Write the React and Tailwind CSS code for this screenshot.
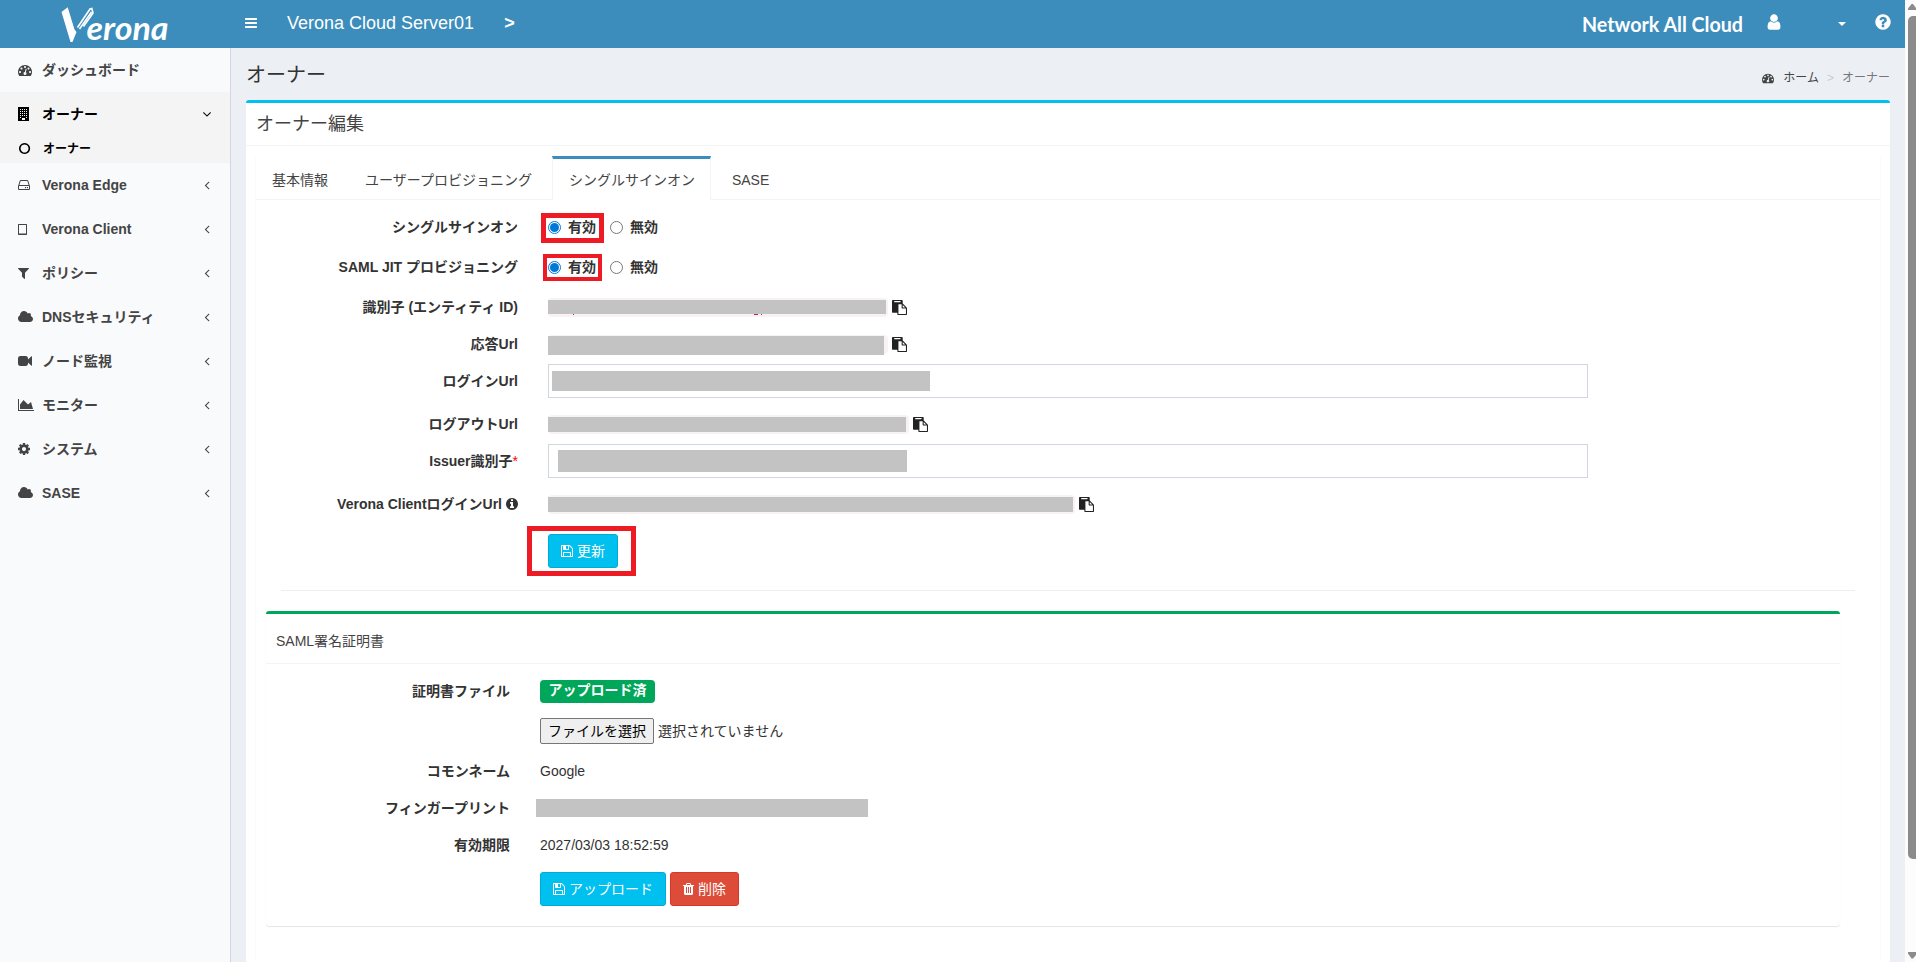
import React from 'react';
import clsx from 'clsx';

// Font Awesome 4 glyph outlines, 1792 units per em
const ICONS = {
  bars: { box: '128 128 1536 1536', d: 'M1664 1344v128q0 26-19 45t-45 19h-1408q-26 0-45-19t-19-45v-128q0-26 19-45t45-19h1408q26 0 45 19t19 45zm0-512v128q0 26-19 45t-45 19h-1408q-26 0-45-19t-19-45v-128q0-26 19-45t45-19h1408q26 0 45 19t19 45zm0-512v128q0 26-19 45t-45 19h-1408q-26 0-45-19t-19-45v-128q0-26 19-45t45-19h1408q26 0 45 19t19 45z' },
  dashboard: { box: '0 0 1792 1792', d: 'M384 1152q0-53-37.5-90.5t-90.5-37.5-90.5 37.5-37.5 90.5 37.5 90.5 90.5 37.5 90.5-37.5 37.5-90.5zm192-448q0-53-37.5-90.5t-90.5-37.5-90.5 37.5-37.5 90.5 37.5 90.5 90.5 37.5 90.5-37.5 37.5-90.5zm428 481l101-382q6-26-7.5-48.5t-38.5-29.5-48 6.5-30 39.5l-101 382q-60 5-107 43.5t-63 98.5q-20 77 20 146t117 89 146-20 89-117q16-60-6-117t-72-91zm660-33q0-53-37.5-90.5t-90.5-37.5-90.5 37.5-37.5 90.5 37.5 90.5 90.5 37.5 90.5-37.5 37.5-90.5zm-640-640q0-53-37.5-90.5t-90.5-37.5-90.5 37.5-37.5 90.5 37.5 90.5 90.5 37.5 90.5-37.5 37.5-90.5zm448 192q0-53-37.5-90.5t-90.5-37.5-90.5 37.5-37.5 90.5 37.5 90.5 90.5 37.5 90.5-37.5 37.5-90.5zm320 448q0 261-141 483-19 29-54 29h-1402q-35 0-54-29-141-221-141-483 0-182 71-348t191-286 286-191 348-71 348 71 286 191 191 286 71 348z' },
  building: { box: '0 0 1792 1792', d: 'M0 0h1408v1792h-1408zM256 256v128h128v-128zm256 0v128h128v-128zm256 0v128h128v-128zm256 0v128h128v-128zM256 512v128h128v-128zm256 0v128h128v-128zm256 0v128h128v-128zm256 0v128h128v-128zM256 768v128h128v-128zm256 0v128h128v-128zm256 0v128h128v-128zm256 0v128h128v-128zM256 1024v128h128v-128zm256 0v128h128v-128zm256 0v128h128v-128zm256 0v128h128v-128zM256 1280v128h128v-128zm768 0v128h128v-128zM512 1408v256h384v-256z' },
  circle: { box: '128 0 1792 1792', d: 'M896 352q-148 0-273 73t-198 198-73 273 73 273 198 198 273 73 273-73 198-198 73-273-73-273-198-198-273-73zm768 544q0 209-103 385.5t-279.5 279.5-385.5 103-385.5-103-279.5-279.5-103-385.5 103-385.5 279.5-279.5 385.5-103 385.5 103 279.5 279.5 103 385.5z' },
  hdd: { box: '128 0 1792 1792', d: 'M1168 1216q0 33-23.5 56.5t-56.5 23.5-56.5-23.5-23.5-56.5 23.5-56.5 56.5-23.5 56.5 23.5 23.5 56.5zm256 0q0 33-23.5 56.5t-56.5 23.5-56.5-23.5-23.5-56.5 23.5-56.5 56.5-23.5 56.5 23.5 23.5 56.5zm112 160v-320q0-13-9.5-22.5t-22.5-9.5h-1216q-13 0-22.5 9.5t-9.5 22.5v320q0 13 9.5 22.5t22.5 9.5h1216q13 0 22.5-9.5t9.5-22.5zm-1230-480h1180l-157-482q-4-13-16-21.5t-26-8.5h-782q-14 0-26 8.5t-16 21.5zm1358 160v320q0 66-47 113t-113 47h-1216q-66 0-113-47t-47-113v-320q0-25 16-75l197-606q17-53 63-86t101-33h782q55 0 101 33t63 86l197 606q16 50 16 75z' },
  tablet: { box: '0 0 1792 1792', d: 'M64 256h1024l64 64v1280l-64 64h-1024l-64-64v-1280zM128 384v1088h896v-1088z' },
  filter: { box: '192 0 1792 1792', d: 'M1595 295q17 41-14 70l-493 493v742q0 42-39 59-13 5-25 5-27 0-45-19l-256-256q-19-19-19-45v-486l-493-493q-31-29-14-70 17-39 59-39h1280q42 0 59 39z' },
  cloud: { box: '64 0 1920 1792', w: 15, d: 'M1984 1152q0 159-112.5 271.5t-271.5 112.5h-1088q-185 0-316.5-131.5t-131.5-316.5q0-132 71-241.5t187-163.5q-2-28-2-43 0-212 150-362t362-150q158 0 286.5 88t187.5 230q70-62 166-62 106 0 181 75t75 181q0 75-41 138 129 30 213 134.5t84 239.5z' },
  video: { box: '0 0 1792 1792', d: 'M1792 352v1088q0 42-39 59-13 5-25 5-27 0-45-19l-403-403v166q0 119-84.5 203.5t-203.5 84.5h-704q-119 0-203.5-84.5t-84.5-203.5v-704q0-119 84.5-203.5t203.5-84.5h704q119 0 203.5 84.5t84.5 203.5v165l403-402q18-19 45-19 12 0 25 5 39 17 39 59z' },
  area: { box: '0 0 2048 1792', w: 16, d: 'M2048 1536v128h-2048v-1536h128v1408h1920zm-384-1024l256 896h-1664v-576l448-576 576 576z' },
  cog: { box: '128 0 1792 1792', d: 'M1152 896q0-106-75-181t-181-75-181 75-75 181 75 181 181 75 181-75 75-181zm512-109v222q0 12-8 23t-20 13l-185 28q-19 54-39 91 35 50 107 138 10 12 10 25t-9 23q-27 37-99 108t-94 71q-12 0-26-9l-138-108q-44 23-91 38-16 136-29 186-7 28-36 28h-222q-14 0-24.5-8.5t-11.5-21.5l-28-184q-49-16-90-37l-141 107q-10 9-25 9-14 0-25-11-126-114-165-168-7-10-7-23 0-12 8-23 15-21 51-66.5t54-70.5q-27-50-41-99l-183-27q-13-2-21-12.5t-8-23.5v-222q0-12 8-23t19-13l186-28q14-46 39-92-40-57-107-138-10-12-10-24 0-10 9-23 26-36 98.5-107.5t94.5-71.5q13 0 26 10l138 107q44-23 91-38 16-136 29-186 7-28 36-28h222q14 0 24.5 8.5t11.5 21.5l28 184q49 16 90 37l142-107q9-9 24-9 13 0 25 10 129 119 165 170 7 8 7 22 0 12-8 23-15 21-51 66.5t-54 70.5q26 50 41 98l183 28q13 2 21 12.5t8 23.5z' },
  angleLeft: { box: '0 0 1792 1792', d: 'M1203 544q0 13-10 23l-393 393 393 393q10 10 10 23t-10 23l-50 50q-10 10-23 10t-23-10l-466-466q-10-10-10-23t10-23l466-466q10-10 23-10t23 10l50 50q10 10 10 23z' },
  angleDown: { box: '0 0 1792 1792', d: 'M1395 736q0 13-10 23l-466 466q-10 10-23 10t-23-10l-466-466q-10-10-10-23t10-23l50-50q10-10 23-10t23 10l393 393 393-393q10-10 23-10t23 10l50 50q10 10 10 23z' },
  user: { box: '0 0 1792 1792', d: 'M1536 1399q0 109-62.5 187t-150.5 78h-854q-88 0-150.5-78t-62.5-187q0-85 8.5-160.5t31.5-152 58.5-131 94-89 134.5-34.5q131 128 313 128t313-128q76 0 134.5 34.5t94 89 58.5 131 31.5 152 8.5 160.5zm-256-887q0 159-112.5 271.5t-271.5 112.5-271.5-112.5-112.5-271.5 112.5-271.5 271.5-112.5 271.5 112.5 112.5 271.5z' },
  question: { box: '0 0 1792 1792', d: 'M1024 1376v-192q0-14-9-23t-23-9h-192q-14 0-23 9t-9 23v192q0 14 9 23t23 9h192q14 0 23-9t9-23zm256-672q0-88-55.5-163t-138.5-116-170-41q-243 0-371 213-15 24 8 42l132 100q7 6 19 6 16 0 25-12 53-68 86-92 34-24 86-24 48 0 85.5 26t37.5 59q0 38-20 61t-68 45q-63 28-115.5 86.5t-52.5 125.5v36q0 14 9 23t23 9h192q14 0 23-9t9-23q0-19 21.5-49.5t54.5-49.5q32-18 49-28.5t46-35 44.5-48 28-60.5 12.5-81zm384 192q0 209-103 385.5t-279.5 279.5-385.5 103-385.5-103-279.5-279.5-103-385.5 103-385.5 279.5-279.5 385.5-103 385.5 103 279.5 279.5 103 385.5z' },
  info: { box: '128 0 1536 1792', w: 12, d: 'M1152 1376v-160q0-14-9-23t-23-9h-96v-512q0-14-9-23t-23-9h-320q-14 0-23 9t-9 23v160q0 14 9 23t23 9h96v320h-96q-14 0-23 9t-9 23v160q0 14 9 23t23 9h448q14 0 23-9t9-23zm-128-896v-160q0-14-9-23t-23-9h-192q-14 0-23 9t-9 23v160q0 14 9 23t23 9h192q14 0 23-9t9-23zm640 416q0 209-103 385.5t-279.5 279.5-385.5 103-385.5-103-279.5-279.5-103-385.5 103-385.5 279.5-279.5 385.5-103 385.5 103 279.5 279.5 103 385.5z' },
  paste: { box: '0 0 1792 1792', d: 'M768 1664h896v-640h-416q-40 0-68-28t-28-68v-416h-384v1152zm256-1440v-64q0-13-9.5-22.5t-22.5-9.5h-704q-13 0-22.5 9.5t-9.5 22.5v64q0 13 9.5 22.5t22.5 9.5h704q13 0 22.5-9.5t9.5-22.5zm256 672h299l-299-299v299zm512 128v672q0 40-28 68t-68 28h-960q-40 0-68-28t-28-68v-160h-544q-40 0-68-28t-28-68v-1344q0-40 28-68t68-28h1088q40 0 68 28t28 68v328q21 13 36 28l408 408q28 28 48 76t20 88z' },
  save: { box: '128 0 1536 1792', w: 12, d: 'M512 1536h768v-384h-768v384zm896 0h128v-896q0-14-10-38.5t-20-34.5l-281-281q-10-10-34-20t-39-10v416q0 40-28 68t-68 28h-576q-40 0-68-28t-28-68v-416h-128v1280h128v-416q0-40 28-68t68-28h832q40 0 68 28t28 68v416zm-384-928v-320q0-13-9.5-22.5t-22.5-9.5h-192q-13 0-22.5 9.5t-9.5 22.5v320q0 13 9.5 22.5t22.5 9.5h192q13 0 22.5-9.5t9.5-22.5zm640 32v928q0 40-28 68t-68 28h-1344q-40 0-68-28t-28-68v-1344q0-40 28-68t68-28h928q40 0 88 20t76 48l280 280q28 28 48 76t20 88z' },
  trash: { box: '192 0 1408 1792', w: 11, d: 'M704 1376v-704q0-14-9-23t-23-9h-64q-14 0-23 9t-9 23v704q0 14 9 23t23 9h64q14 0 23-9t9-23zm256 0v-704q0-14-9-23t-23-9h-64q-14 0-23 9t-9 23v704q0 14 9 23t23 9h64q14 0 23-9t9-23zm256 0v-704q0-14-9-23t-23-9h-64q-14 0-23 9t-9 23v704q0 14 9 23t23 9h64q14 0 23-9t9-23zm-544-992h448l-48-117q-7-9-17-11h-317q-10 2-17 11zm928 32v64q0 14-9 23t-23 9h-96v948q0 83-47 143.5t-113 60.5h-832q-66 0-113-58.5t-47-141.5v-952h-96q-14 0-23-9t-9-23v-64q0-14 9-23t23-9h309l70-167q15-37 54-63t79-26h320q40 0 79 26t54 63l70 167h309q14 0 23 9t9 23z' },
};

function Icon({ name, size = 14, className }) {
  const { box, d, w = 14 } = ICONS[name];
  const evenOdd = name === 'building' || name === 'tablet';
  return (
    <svg
      viewBox={box}
      width={(w * size) / 14}
      height={size}
      fill="currentColor"
      fillRule={evenOdd ? 'evenodd' : 'nonzero'}
      className={clsx('shrink-0', className)}
    >
      <path d={d} />
    </svg>
  );
}

const MENU = [
  { icon: 'hdd', label: 'Verona Edge' },
  { icon: 'tablet', label: 'Verona Client' },
  { icon: 'filter', label: 'ポリシー' },
  { icon: 'cloud', label: 'DNSセキュリティ' },
  { icon: 'video', label: 'ノード監視' },
  { icon: 'area', label: 'モニター' },
  { icon: 'cog', label: 'システム' },
  { icon: 'cloud', label: 'SASE' },
];

function Logo() {
  return (
    <svg viewBox="0 0 120 38" className="ml-[60px] h-[38px] w-[120px]" fill="#fff">
      <path d="M1.500 7L7.700 2.300L14.500 24.500L16.500 27L12.500 37L10.500 37Z" />
      <path d="M17.500 22.500L30 4L31.800 3.500L33 8L23.500 21.500M19.500 24L31.500 7" fill="none" stroke="#fff" strokeWidth="1.600" />
      <text x="26.500" y="34.500" fontSize="32" fontWeight="700" fontStyle="italic" fontFamily="Lato, sans-serif" textLength="82" lengthAdjust="spacingAndGlyphs">erona</text>
    </svg>
  );
}

function Header() {
  return (
    <header className="flex h-12 shrink-0 items-center bg-[#3c8dbc] text-white">
      <div className="w-[230px] shrink-0"><Logo /></div>
      <Icon name="bars" size={12} className="ml-[15px] -mt-[3px]" />
      <span className="ml-[30px] -mt-[3px] text-lg leading-6">Verona Cloud Server01</span>
      <span className="ml-[30px] -mt-[3px] text-lg leading-6 font-bold">&gt;</span>
      <svg viewBox="0 0 170 28" className="ml-auto -mr-[7px] -mt-px h-7 w-[170px]" fill="#fff">
        <text x="0" y="21.500" fontSize="21.500" fontWeight="700" fontFamily="Lato, sans-serif" textLength="161" lengthAdjust="spacingAndGlyphs">Network All Cloud</text>
      </svg>
      <Icon name="user" size={18} className="ml-5 -mt-[5px]" />
      <span className="ml-[55px] -mt-px size-0 border-x-4 border-t-4 border-x-transparent border-t-white" />
      <Icon name="question" size={18} className="ml-7 mr-[13px] -mt-1" />
    </header>
  );
}

function MenuItem({ icon, label, arrow = 'angleLeft', active }) {
  return (
    <li className={clsx('flex h-11 items-center pl-[18px] pr-4 text-sm font-bold', active ? 'text-black' : 'text-[#444]')}>
      <span className="w-6"><Icon name={icon} /></span>
      <span className="leading-5">{label}</span>
      {arrow && <Icon name={arrow} className="ml-auto" />}
    </li>
  );
}

function Sidebar() {
  return (
    <aside className="w-[231px] shrink-0 border-r border-[#d2d6de] bg-[#f9fafc]">
      <ul>
        <MenuItem icon="dashboard" label="ダッシュボード" arrow={null} />
        <div className="bg-[#f4f4f5]">
          <MenuItem icon="building" label="オーナー" arrow="angleDown" active />
          <li className="flex h-[27px] items-center pb-[2px] pl-[19px] text-xs font-bold text-black">
            <span className="w-6"><Icon name="circle" size={13} /></span>
            オーナー
          </li>
        </div>
        {MENU.map((m) => <MenuItem key={m.label} {...m} />)}
      </ul>
    </aside>
  );
}

function Row({ label, labelWidth, className, children }) {
  return (
    <div className={clsx('flex items-center', className)}>
      <div className={clsx('flex shrink-0 items-center justify-end font-bold leading-5 text-[#333]', labelWidth)}>{label}</div>
      {children}
    </div>
  );
}

function Radio({ checked }) {
  return (
    <span className={clsx('flex size-[13px] items-center justify-center rounded-full border', checked ? 'border-[#0078d7]' : 'border-[#767676]')}>
      {checked && <span className="size-[9px] rounded-full bg-[#0078d7]" />}
    </span>
  );
}

function RadioPair({ frame }) {
  return (
    <div className="relative ml-[30px] flex items-center font-bold text-[#333]">
      <Radio checked /><span className="ml-[7px]">有効</span>
      <span className="ml-[14px]"><Radio /></span><span className="ml-[7px]">無効</span>
      <span className={clsx('absolute border-[#ed1c24]', frame)} />
    </div>
  );
}

function CodeLine({ code, mask, children }) {
  return (
    <div className="ml-[30px] flex items-center gap-1">
      <span className={clsx('relative h-[19px] rounded bg-[#f9f2f4]', code)}>
        <span className={clsx('block bg-[#c3c3c3]', mask)} />
        {children}
      </span>
      <Icon name="paste" size={15} className="text-[#222]" />
    </div>
  );
}

function Button({ icon, className, children }) {
  return (
    <button className={clsx('flex h-[34px] items-center justify-center gap-1 rounded-[3px] border text-sm text-white', className)}>
      <Icon name={icon} />
      {children}
    </button>
  );
}

const tab = 'mr-[5px] h-[43px] border-t-[3px] px-4 pt-[11px] leading-5';
const ssoLabel = 'w-[252px]';
const certLabel = 'w-[244px]';

function SsoForm() {
  return (
    <div className="pl-[10px] pt-[7px]">
      <Row labelWidth={ssoLabel} className="h-10" label="シングルサインオン">
        <RadioPair frame="-left-[7px] -top-[4px] h-[30px] w-[63px] border-[5px]" />
      </Row>
      <Row labelWidth={ssoLabel} className="h-10" label="SAML JIT プロビジョニング">
        <RadioPair frame="-left-[5px] -top-[3px] h-[27px] w-[59px] border-4" />
      </Row>
      <Row labelWidth={ssoLabel} className="h-10" label="識別子 (エンティティ ID)">
        <CodeLine code="w-[340px] pt-[2px]" mask="h-[14px] w-[338px]">
          {/* descenders below the mask */}
          <span className="absolute left-[25px] top-4 h-px w-px bg-[#c7254e]" />
          <span className="absolute left-[206px] top-4 h-px w-[4px] bg-[#c7254e]" />
          <span className="absolute left-[213px] top-4 h-px w-px bg-[#c7254e]" />
        </CodeLine>
      </Row>
      <Row labelWidth={ssoLabel} className="h-[34px]" label="応答Url">
        <CodeLine code="w-[340px] pt-px" mask="h-[19px] w-[336px]" />
      </Row>
      <Row labelWidth={ssoLabel} className="mt-[3px] h-[34px]" label="ログインUrl">
        <div className="ml-[30px] h-[34px] w-[1040px] border border-[#d2d6de] pl-[3px] pt-[6px]">
          <div className="h-5 w-[378px] bg-[#c3c3c3]" />
        </div>
      </Row>
      <Row labelWidth={ssoLabel} className="mt-[9px] h-[34px]" label="ログアウトUrl">
        <CodeLine code="w-[361px] pt-[2px]" mask="h-[15px] w-[358px]" />
      </Row>
      <Row labelWidth={ssoLabel} className="mt-[3px] h-[34px]" label={<>Issuer識別子<span className="font-normal text-[#f00]">*</span></>}>
        <div className="ml-[30px] h-[34px] w-[1040px] border border-[#d2d6de] pl-[9px] pt-[5px]">
          <div className="h-[22px] w-[349px] bg-[#c3c3c3]" />
        </div>
      </Row>
      <Row labelWidth={ssoLabel} className="mt-[9px] h-[34px]" label={<>Verona ClientログインUrl<Icon name="info" className="ml-1" /></>}>
        <CodeLine code="w-[527px] pt-[2px]" mask="h-[15px] w-[525px]" />
      </Row>
      <Row labelWidth={ssoLabel} className="mt-[13px]">
        <div className="relative ml-[30px]">
          <Button icon="save" className="w-[70px] border-[#00acd6] bg-[#00c0ef]">更新</Button>
          <span className="absolute -left-[21px] -top-2 h-[50px] w-[109px] border-[5px] border-[#ed1c24]" />
        </div>
      </Row>
    </div>
  );
}

function CertificateBox() {
  return (
    <section className="ml-[10px] mt-5 h-[315px] w-[1574px] rounded-[3px] border-t-[3px] border-[#00a65a] bg-white shadow-[0_1px_1px_rgba(0,0,0,0.1)]">
      <h4 className="flex h-[50px] items-center border-b border-[#f4f4f4] px-[10px] pt-[5px] text-[#444]">SAML署名証明書</h4>
      <div className="pt-[7px]">
        <Row labelWidth={certLabel} className="h-10" label="証明書ファイル">
          <span className="ml-[30px] flex h-[23px] w-[115px] items-center justify-center rounded bg-[#00a65a] pb-[3px] font-bold text-white">アップロード済</span>
        </Row>
        <Row labelWidth={certLabel} className="h-10">
          <span className="ml-[30px] flex h-[26px] w-[114px] items-center justify-center rounded-[2px] border border-[#767676] bg-[#efefef] text-black">ファイルを選択</span>
          <span className="ml-1">選択されていません</span>
        </Row>
        <Row labelWidth={certLabel} className="h-[39px]" label="コモンネーム">
          <span className="ml-[30px]">Google</span>
        </Row>
        <Row labelWidth={certLabel} className="h-9" label="フィンガープリント">
          <div className="-mt-px ml-[26px] h-[18px] w-[332px] bg-[#c3c3c3]" />
        </Row>
        <Row labelWidth={certLabel} className="h-[38px]" label="有効期限">
          <span className="ml-[30px]">2027/03/03 18:52:59</span>
        </Row>
        <Row labelWidth={certLabel} className="mt-2">
          <div className="ml-[30px] flex gap-1">
            <Button icon="save" className="w-[126px] border-[#00acd6] bg-[#00c0ef]">アップロード</Button>
            <Button icon="trash" className="w-[69px] border-[#d73925] bg-[#dd4b39]">削除</Button>
          </div>
        </Row>
      </div>
    </section>
  );
}

function Content() {
  return (
    <main className="flex-1 bg-[#ecf0f5] pl-[15px] pr-[15px] text-[#333]">
      <div className="flex h-[52px] justify-between">
        <h1 className="pt-3 text-xl leading-[30px]">オーナー</h1>
        <nav className="flex items-center pt-[7px] text-xs text-[#444]">
          <Icon name="dashboard" size={12} className="mr-[9px]" />
          ホーム
          <span className="mx-2 text-[#ccc]">&gt;</span>
          <span className="text-[#777]">オーナー</span>
        </nav>
      </div>
      <section className="h-[900px] rounded-t-[3px] border-t-[3px] border-[#00c0ef] bg-white">
        <h3 className="flex h-[43px] items-center border-b border-[#f4f4f4] px-[10px] text-lg text-[#444]">オーナー編集</h3>
        <div className="mx-[10px] mt-[10px] h-[860px] shadow-[0_1px_1px_rgba(0,0,0,0.1)]">
          <ul className="flex h-[44px] border-b border-[#f4f4f4] text-[#444]">
            <li className={clsx(tab, 'border-transparent')}>基本情報</li>
            <li className={clsx(tab, 'border-transparent')}>ユーザープロビジョニング</li>
            <li className="-ml-px mr-[5px] h-[44px] border-x border-t-[3px] border-x-[#f4f4f4] border-t-[#3c8dbc] bg-white pl-4 pr-[15px] pt-[11px] leading-5">シングルサインオン</li>
            <li className={clsx(tab, 'border-transparent')}>SASE</li>
          </ul>
          <SsoForm />
          <hr className="ml-[25px] mr-[25px] mt-[22px] border-[#eee]" />
          <CertificateBox />
        </div>
      </section>
    </main>
  );
}

function Scrollbar() {
  return (
    <div className="flex w-[11px] shrink-0 flex-col items-end bg-[#fcfcfc]">
      <svg viewBox="0 0 8 16" className="h-4 w-2" fill="#8b8b8b"><path d="M0 10V8.500L3.500 4H5L8 8V10Z" /></svg>
      <div className="h-[843px] w-2 rounded-l-[5px] bg-[#8b8b8b]" />
      <svg viewBox="0 0 8 16" className="mt-auto h-4 w-2" fill="#8b8b8b"><path d="M0 6V7.500L3.500 12.500H5L8 9V6Z" /></svg>
    </div>
  );
}

export default function App() {
  return (
    <div className="flex h-[962px] w-[1916px] overflow-hidden bg-white font-['Liberation_Sans','Noto_Sans_CJK_JP',sans-serif] text-sm leading-5">
      <div className="flex min-w-0 flex-1 flex-col">
        <Header />
        <div className="flex min-h-0 flex-1 overflow-hidden">
          <Sidebar />
          <Content />
        </div>
      </div>
      <Scrollbar />
    </div>
  );
}
